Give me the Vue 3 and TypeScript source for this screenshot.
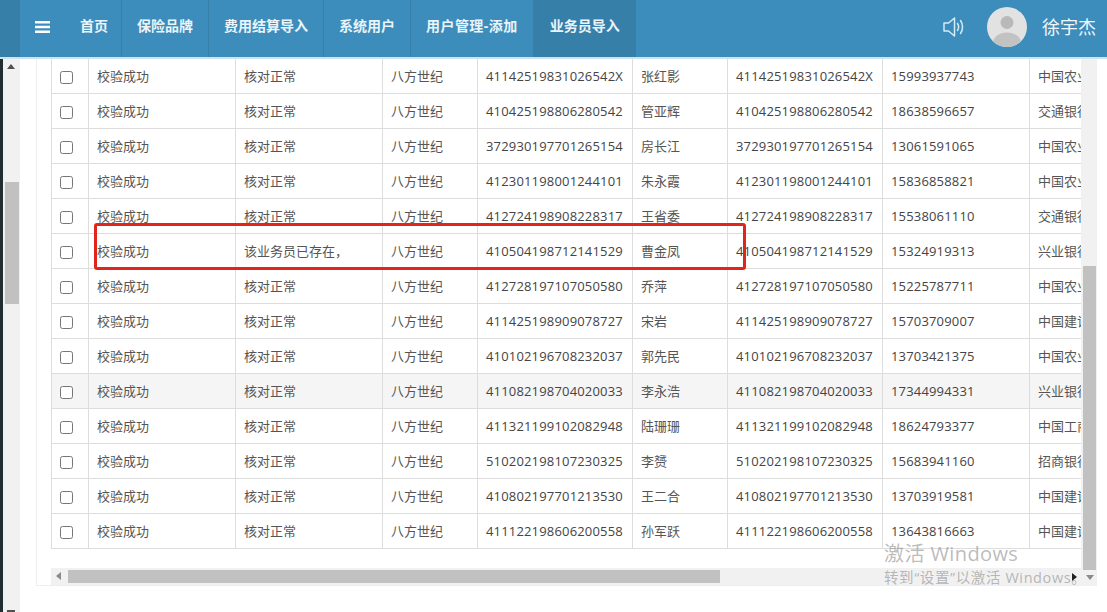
<script setup lang="ts">
interface Row {
  status: string
  note: string
  brand: string
  id: string
  name: string
  phone: string
  bank: string
  hover?: boolean
}
const nav = ['首页', '保险品牌', '费用结算导入', '系统用户', '用户管理-添加', '业务员导入']
const raw: [string, string, string, string][] = [
  ['41142519831026542X', '张红影', '15993937743', '中国农业银行'],
  ['410425198806280542', '管亚辉', '18638596657', '交通银行'],
  ['372930197701265154', '房长江', '13061591065', '中国农业银行'],
  ['412301198001244101', '朱永霞', '15836858821', '中国农业银行'],
  ['412724198908228317', '王省委', '15538061110', '交通银行'],
  ['410504198712141529', '曹金凤', '15324919313', '兴业银行'],
  ['412728197107050580', '乔萍', '15225787711', '中国农业银行'],
  ['411425198909078727', '宋岩', '15703709007', '中国建设银行'],
  ['410102196708232037', '郭先民', '13703421375', '中国农业银行'],
  ['411082198704020033', '李永浩', '17344994331', '兴业银行'],
  ['411321199102082948', '陆珊珊', '18624793377', '中国工商银行'],
  ['510202198107230325', '李赟', '15683941160', '招商银行'],
  ['410802197701213530', '王二合', '13703919581', '中国建设银行'],
  ['411122198606200558', '孙军跃', '13643816663', '中国建设银行'],
]
const rows: Row[] = raw.map((r, i) => ({
  status: '校验成功',
  note: i === 5 ? '该业务员已存在，' : '核对正常',
  brand: '八方世纪',
  id: r[0],
  name: r[1],
  phone: r[2],
  bank: r[3],
  hover: i === 9,
}))
</script>

<template>
  <div class="page">
    <header class="topbar">
      <div class="logo-edge"></div>
      <button class="burger" aria-label="menu">
        <svg width="15" height="12" viewBox="0 0 15 12"><path d="M0 0h15v2.6H0zM0 4.700h15v2.600H0zM0 9.400h15V12H0z" fill="#fff" /></svg>
      </button>
      <nav class="nav">
        <a
          v-for="(item, i) in nav"
          :key="item"
          class="nav-item"
          :class="{ active: i === nav.length - 1, spaced: i === 4 }"
        >{{ item }}</a>
      </nav>
      <div class="user">
        <svg class="speaker" width="24" height="22" viewBox="0 0 24 22" fill="none" stroke="#d3ecf8" stroke-width="1.500">
          <path d="M2 7h4.500L12.500 2v18L6.500 15H2z" stroke-linejoin="round" />
          <path d="M15.500 7.500c1.300 2 1.300 5 0 7M18.500 4.500c2.700 3.800 2.700 9.200 0 13" stroke-linecap="round" />
        </svg>
        <svg class="avatar" width="40" height="40" viewBox="0 0 40 40">
          <defs>
            <clipPath id="avatar-clip"><circle cx="20" cy="20" r="20" /></clipPath>
          </defs>
          <circle cx="20" cy="20" r="20" fill="#e2e2e2" />
          <g clip-path="url(#avatar-clip)">
            <circle cx="20" cy="15.500" r="6.500" fill="#b9b9b9" />
            <ellipse cx="20" cy="36" rx="14" ry="10.500" fill="#c2c2c2" />
          </g>
        </svg>
        <span class="user-name">徐宇杰</span>
      </div>
    </header>

    <main class="main">
      <aside class="outer-bar">
        <div class="outer-track">
          <span class="arrow up"></span>
          <div class="outer-thumb"></div>
          <span class="arrow up-end"></span>
        </div>
      </aside>
      <section class="panel">
        <div class="table-clip">
          <table class="grid">
            <colgroup>
              <col class="c-check" />
              <col class="c-wide" />
              <col class="c-wide" />
              <col class="c-narrow" />
              <col class="c-id" />
              <col class="c-narrow" />
              <col class="c-id" />
              <col class="c-wide" />
              <col class="c-bank" />
            </colgroup>
            <tbody>
              <tr v-for="row in rows" :key="row.id" :class="{ hover: row.hover }">
                <td class="check"><input type="checkbox" /></td>
                <td>{{ row.status }}</td>
                <td>{{ row.note }}</td>
                <td>{{ row.brand }}</td>
                <td class="num">{{ row.id }}</td>
                <td>{{ row.name }}</td>
                <td class="num">{{ row.id }}</td>
                <td class="num">{{ row.phone }}</td>
                <td>{{ row.bank }}</td>
              </tr>
            </tbody>
          </table>
        </div>
        <div class="hbar">
          <span class="arrow left"></span>
          <div class="hthumb"></div>
        </div>
      </section>
      <aside class="vbar">
        <div class="vspace"></div>
        <div class="vthumb"></div>
        <div class="vend"><span class="arrow down"></span></div>
      </aside>
    </main>

    <div class="marker"></div>
    <span class="cursor-arrow"></span>
    <div class="watermark">
      <div class="wm-title">激活 Windows</div>
      <div class="wm-sub">转到“设置”以激活 Windows。</div>
    </div>
  </div>
</template>

<style>
html,
body {
  margin: 0;
  background: #fff;
}
</style>

<style scoped>
.page {
  position: relative;
  width: 1107px;
  height: 612px;
  overflow: hidden;
  display: flex;
  flex-direction: column;
  font-family: "Open Sans", "Noto Sans CJK SC", sans-serif;
  background: #fff;
}
.topbar {
  flex: none;
  height: 57px;
  display: flex;
  align-items: stretch;
  background: #3c8dbc;
  border-bottom: 2px solid #cfe3ef;
}
.logo-edge {
  width: 20px;
  background: #367fa9;
}
.burger {
  width: 45px;
  padding: 0 0 3px 15px;
  border: 0;
  background: none;
  display: flex;
  align-items: center;
}
.nav {
  display: flex;
}
.nav-item {
  padding: 0 15px;
  border-right: 1px solid #367fa9;
  color: #eaf4f9;
  font-size: 14px;
  font-weight: 700;
  line-height: 52px;
}
.nav-item:first-child {
  padding-right: 13px;
}
.nav-item.spaced {
  letter-spacing: 0.45px;
}
.nav-item.active {
  background: #367fa9;
  border-right: 0;
  padding: 0 16px;
}
.user {
  margin-left: auto;
  display: flex;
  align-items: center;
  padding: 0 11px 3px 0;
}
.speaker {
  margin-right: 21px;
}
.user-name {
  margin: 0 0 3px 15px;
  color: #f0f7fb;
  font-size: 18px;
}
.main {
  flex: 1;
  display: flex;
  min-height: 0;
}
.outer-bar {
  width: 20px;
  flex: none;
  border-left: 3px solid #222d32;
  box-sizing: border-box;
  background: #f1f1f1;
}
.outer-track {
  position: relative;
  height: 100%;
}
.outer-thumb {
  position: absolute;
  top: 123px;
  left: 2px;
  width: 14px;
  height: 122px;
  background: #c1c1c1;
}
.arrow {
  position: absolute;
  width: 0;
  height: 0;
}
.arrow.up {
  top: 5px;
  left: 4px;
  border: 4px solid transparent;
  border-top: 0;
  border-bottom: 5px solid #505050;
}
.arrow.up-end {
  bottom: 0;
  left: 4px;
  width: 8px;
  height: 2px;
  background: #505050;
}
.panel {
  position: relative;
  width: 1045px;
  margin: 0 0 26px 16px;
  box-sizing: border-box;
  padding-left: 14px;
  border-left: 1px solid #eee;
  border-bottom: 1px solid #eee;
  display: flex;
  flex-direction: column;
}
.table-clip {
  flex: 1;
  min-height: 0;
  overflow: hidden;
}
.grid {
  width: 1129px;
  table-layout: fixed;
  border-collapse: separate;
  border-spacing: 0;
  border-left: 1px solid #ddd;
  color: #555;
  font-size: 13px;
}
.c-check { width: 37px; }
.c-wide { width: 147px; }
.c-narrow { width: 95px; }
.c-id { width: 155px; }
.c-bank { width: 150px; }
.grid td {
  height: 34px;
  padding: 0 8px;
  border-right: 1px solid #ddd;
  border-bottom: 1px solid #ddd;
  white-space: nowrap;
  overflow: hidden;
  line-height: 34px;
}
.grid tr.hover td {
  background: #f5f5f5;
}
.grid td.check {
  padding: 0;
}
.check input {
  display: block;
  width: 13px;
  height: 13px;
  margin: 3px 0 0 8px;
}
.grid td.num {
  color: #444;
  letter-spacing: 0.17px;
}
.hbar {
  position: relative;
  flex: none;
  height: 17px;
  background: #f1f1f1;
}
.arrow.left {
  top: 4px;
  left: 5px;
  border: 4px solid transparent;
  border-left: 0;
  border-right: 5px solid #8a8a8a;
}
.hthumb {
  position: absolute;
  top: 2px;
  left: 17px;
  width: 652px;
  height: 13px;
  background: #c1c1c1;
}
.vbar {
  flex: none;
  width: 16px;
  margin-bottom: 26px;
  display: flex;
  flex-direction: column;
  background: #f1f1f1;
}
.vspace {
  height: 207px;
}
.vthumb {
  height: 304px;
  margin: 0 1px 0 2px;
  background: #c1c1c1;
}
.vend {
  position: relative;
  flex: 1;
}
.arrow.down {
  top: 5px;
  left: 5px;
  border: 4px solid transparent;
  border-bottom: 0;
  border-top: 5px solid #8a8a8a;
}
.cursor-arrow {
  position: absolute;
  left: 1072px;
  top: 573px;
  border: 4px solid transparent;
  border-right: 0;
  border-left: 5px solid #222;
}
.marker {
  position: absolute;
  left: 94px;
  top: 223px;
  width: 652px;
  height: 47px;
  box-sizing: border-box;
  border: 3px solid #e1251b;
  border-radius: 3px;
}
.watermark {
  position: absolute;
  left: 884px;
  top: 541px;
  color: rgba(130, 130, 130, 0.55);
  white-space: nowrap;
}
.wm-title {
  font-size: 20px;
  line-height: 26px;
  letter-spacing: 0.4px;
}
.wm-sub {
  margin-top: 1px;
  font-size: 14.5px;
  line-height: 20px;
  letter-spacing: 0.6px;
}
</style>
